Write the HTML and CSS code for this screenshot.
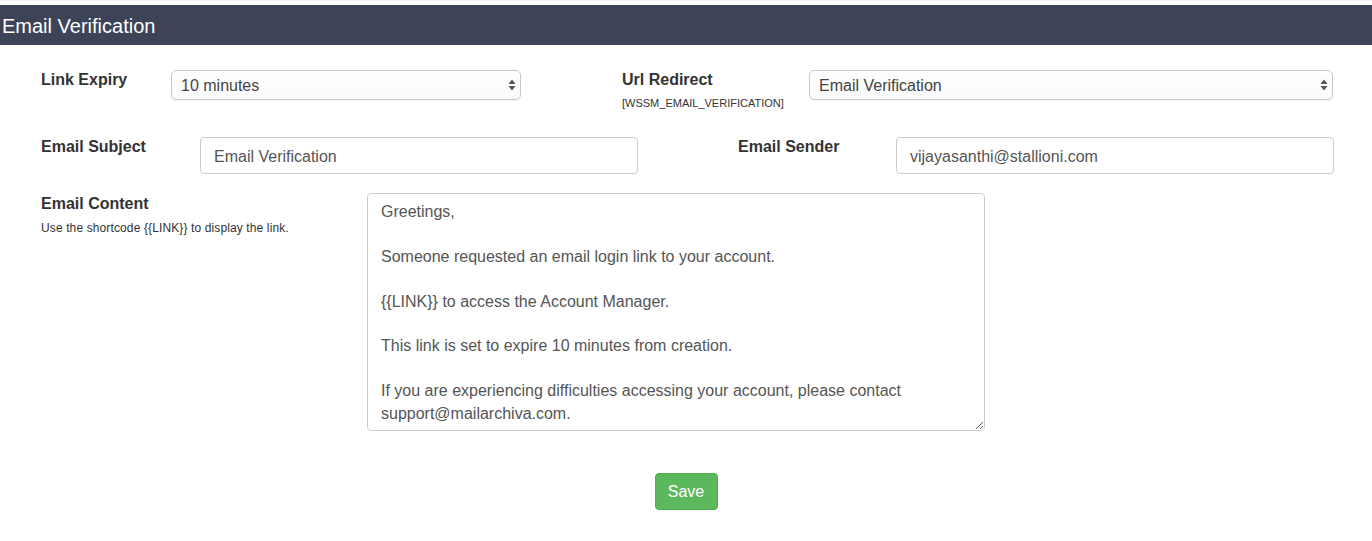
FILE: index.html
```html
<!DOCTYPE html>
<html>
<head>
<meta charset="utf-8">
<link rel="stylesheet" href="styles.css">
</head>
<body>
<div class="topline"></div>
<div class="header">Email Verification</div>
<form class="form">
  <div class="row row1">
    <div class="label lbl-expiry"><b>Link Expiry</b></div>
    <div class="select sel-expiry">
      <span>10 minutes</span>
      <svg class="arrows" width="8" height="12" viewBox="0 0 8 12"><path d="M4 0.5 L7.5 5 H0.5 Z M4 11.5 L7.5 7 H0.5 Z" fill="#555"/></svg>
    </div>
    <div class="label lbl-url"><b>Url Redirect</b><small>[WSSM_EMAIL_VERIFICATION]</small></div>
    <div class="select sel-url">
      <span>Email Verification</span>
      <svg class="arrows" width="8" height="12" viewBox="0 0 8 12"><path d="M4 0.5 L7.5 5 H0.5 Z M4 11.5 L7.5 7 H0.5 Z" fill="#555"/></svg>
    </div>
  </div>
  <div class="row row2">
    <div class="label lbl-subject"><b>Email Subject</b></div>
    <div class="input in-subject">Email Verification</div>
    <div class="label lbl-sender"><b>Email Sender</b></div>
    <div class="input in-sender">vijayasanthi@stallioni.com</div>
  </div>
  <div class="row row3">
    <div class="label lbl-content"><b>Email Content</b><small>Use the shortcode {{LINK}} to display the link.</small></div>
    <textarea class="textarea">Greetings,

Someone requested an email login link to your account.

{{LINK}} to access the Account Manager.

This link is set to expire 10 minutes from creation.

If you are experiencing difficulties accessing your account, please contact support@mailarchiva.com.</textarea>
  </div>
  <div class="actions">
    <button type="button" class="btn-save">Save</button>
  </div>
</form>
</body>
</html>
```
FILE: styles.css
```css
html, body {
  margin: 0;
  padding: 0;
  background: #fff;
  font-family: "Liberation Sans", Arial, sans-serif;
  color: #333;
}
.topline {
  height: 5px;
  background: #fff;
  border-top: 1px solid #f0f0f0;
  box-sizing: border-box;
}
.header {
  height: 40px;
  line-height: 42px;
  background: #3d4457;
  color: #fff;
  font-size: 20px;
  padding-left: 2px;
}
.form {
  padding-left: 41px;
}
.row {
  display: flex;
  align-items: flex-start;
}
.row1 { margin-top: 25px; }
.row2 { margin-top: 27px; }
.row3 { margin-top: 19px; }
.label {
  font-size: 16px;
  line-height: 18px;
  display: flex;
  flex-direction: column;
}
.label b { font-weight: bold; color: #333; }
.label small {
  font-size: 11px;
  line-height: 13px;
  color: #333;
}
.lbl-expiry { width: 130px; padding-top: 1px; }
.lbl-url { width: 187px; margin-left: 101px; padding-top: 1px; }
.lbl-url small { margin-top: 8px; }
.lbl-subject { width: 159px; padding-top: 1px; }
.lbl-sender { width: 158px; margin-left: 100px; padding-top: 1px; }
.lbl-content { width: 326px; padding-top: 2px; }
.lbl-content small { margin-top: 9px; font-size: 12px; letter-spacing: 0.12px; }
.select {
  position: relative;
  height: 30px;
  box-sizing: border-box;
  border: 1px solid #c8c8c8;
  border-radius: 5px;
  background: linear-gradient(#fff, #fafafa);
  font-size: 16px;
  color: #444;
  line-height: 29px;
  padding-left: 9px;
  box-shadow: 0 1px 1px rgba(0,0,0,0.05);
}
.sel-expiry { width: 350px; }
.sel-url { width: 524px; }
.arrows {
  position: absolute;
  right: 4px;
  top: 8px;
}
.input {
  height: 37px;
  box-sizing: border-box;
  border: 1px solid #ccc;
  border-radius: 4px;
  font-size: 16px;
  color: #555;
  line-height: 37px;
  padding-left: 13px;
}
.in-subject { width: 438px; }
.in-sender { width: 438px; }
.textarea {
  width: 618px;
  height: 238px;
  box-sizing: border-box;
  border: 1px solid #ccc;
  border-radius: 4px;
  font-family: "Liberation Sans", Arial, sans-serif;
  font-size: 16px;
  line-height: 22.4px;
  color: #555;
  padding: 7px 13px;
  margin: 0;
  resize: both;
  overflow: hidden;
}
.actions {
  display: flex;
  justify-content: center;
  margin-top: 42px;
  margin-left: -41px;
}
.btn-save {
  width: 63px;
  height: 37px;
  background: #5cb85c;
  border: 1px solid #4cae4c;
  border-radius: 4px;
  color: #fff;
  font-family: "Liberation Sans", Arial, sans-serif;
  font-size: 16px;
  padding: 0;
}
```
